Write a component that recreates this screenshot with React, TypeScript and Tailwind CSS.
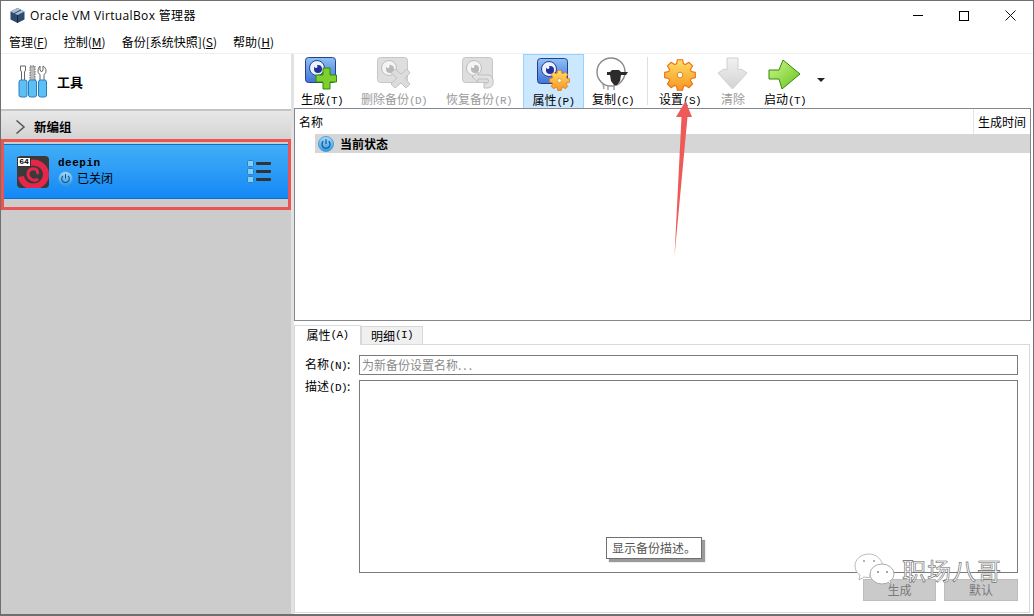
import React from "react";

const cjk = "font-['Noto_Sans_CJK_SC','Liberation_Sans',sans-serif]";
const mono = "font-['Liberation_Mono','Noto_Sans_CJK_SC',monospace]";

// Latin part of the bitmap-looking labels, "(T)" and so on
const Key = ({ k }: { k: string }) => <span className={`${mono} text-[11px] tracking-[-0.6px]`}>({k})</span>;

// Eight teeth, built as one outline so the root circle shows no seam
const gearPath = () => {
  const pts: string[] = [];
  for (let i = 0; i < 8; i++) {
    const a = (i * Math.PI) / 4 - Math.PI / 2;
    [[-0.3, 12.500], [-0.17, 16.500], [0.17, 16.500], [0.3, 12.500]].forEach(([d, r]) => {
      pts.push(`${(17 + r * Math.cos(a + d)).toFixed(2)} ${(17 + r * Math.sin(a + d)).toFixed(2)}`);
    });
  }
  return `M${pts.join("L")}Z`;
};

const Gear = ({ size = 34 }: { size?: number }) => (
  <svg width={size} height={size} viewBox="0 0 34 34">
    <defs>
      <linearGradient id={`gear${size}`} gradientUnits="userSpaceOnUse" x1="0" y1="0" x2="0" y2="34">
        <stop offset="0" stopColor="#ffe066" />
        <stop offset="1" stopColor="#f7931e" />
      </linearGradient>
    </defs>
    <path d={gearPath()} fill={`url(#gear${size})`} stroke="#e8701a" strokeWidth="1.200" strokeLinejoin="round" />
    <circle cx="17" cy="17" r="3" fill="#fff" stroke="#d9801a" strokeWidth="1" />
  </svg>
);

const Snapshot = ({ disabled = false }: { disabled?: boolean }) => (
  <svg width="32" height="27" viewBox="0 0 32 27" className="absolute left-0 top-0">
    <defs>
      <linearGradient id="snapBlue" x1="0" y1="0" x2="0" y2="1">
        <stop offset="0" stopColor="#8fc0f5" />
        <stop offset="1" stopColor="#3f74d6" />
      </linearGradient>
    </defs>
    <rect x="0.5" y="0.5" width="30" height="25" rx="3" fill={disabled ? "#dedede" : "url(#snapBlue)"} stroke={disabled ? "#c6c6c6" : "#24408f"} />
    <circle cx="12" cy="11" r="7.5" fill={disabled ? "#f4f4f4" : "#e9f2ff"} stroke={disabled ? "#bdbdbd" : "#26408e"} />
    <circle cx="13" cy="12" r="4" fill={disabled ? "#b8b8b8" : "#20309a"} />
    <circle cx="11" cy="9.5" r="1.4" fill="#fff" />
  </svg>
);

const TakeIcon = () => (
  <div className="relative h-[34px] w-[34px]">
    <Snapshot />
    <svg width="34" height="34" viewBox="0 0 34 34" className="absolute left-0 top-0">
      <path d="M18 11h7v7h6.500v7H25v7h-7v-7h-7v-7h7z" fill="#7fd02c" stroke="#2f8a0a" strokeWidth="1" />
    </svg>
  </div>
);

const DeleteIcon = () => (
  <div className="relative h-[34px] w-[34px]">
    <Snapshot disabled />
    <svg width="34" height="34" viewBox="0 0 34 34" className="absolute left-0 top-0">
      <path d="M14 16l4-4 6 5 6-5 3 4-5 5 5 6-4 4-5-5-6 5-4-4 6-6z" fill="#dcdcdc" stroke="#c2c2c2" />
    </svg>
  </div>
);

const RestoreIcon = () => (
  <div className="relative h-[34px] w-[34px]">
    <Snapshot disabled />
    <svg width="34" height="34" viewBox="0 0 34 34" className="absolute left-0 top-0">
      <path d="M16 15l-6 5 6 5v-3h9c2 0 2 4 0 4h-3v5h4c7 0 7-13 0-13H16z" fill="#e2e2e2" stroke="#bfbfbf" />
    </svg>
  </div>
);

const PropsIcon = () => (
  <div className="relative h-[34px] w-[34px]">
    <Snapshot />
    <div className="absolute left-[12px] top-[12px]">
      <Gear size={21} />
    </div>
  </div>
);

const SheepIcon = () => (
  <svg width="34" height="34" viewBox="0 0 34 34">
    <path d="M7 26l1 6M12 28v5M18 28v5" stroke="#a8a8a8" strokeWidth="1.6" />
    <ellipse cx="15" cy="15" rx="14" ry="14" fill="#fff" stroke="#8a8a8a" strokeWidth="1.4" />
    <path d="M11 15H14l2-2h7l2 2h7l-2 3h-5l-1 6-3 4h-3l-3-4-1-6h-3z" fill="#2b2b2b" />
  </svg>
);

const ArrowDownIcon = () => (
  <svg width="32" height="34" viewBox="0 0 32 34">
    <defs>
      <linearGradient id="greyArrow" x1="0" y1="0" x2="0" y2="1">
        <stop offset="0" stopColor="#f1f1f1" />
        <stop offset="1" stopColor="#d3d3d3" />
      </linearGradient>
    </defs>
    <path d="M10 1h11v12l3-1 6 4-14.500 16L1 16l6-4 3 1z" fill="url(#greyArrow)" stroke="#cfcfcf" />
  </svg>
);

const StartIcon = () => (
  <svg width="34" height="32" viewBox="0 0 34 32">
    <defs>
      <linearGradient id="startGreen" x1="0" y1="0" x2="1" y2="1">
        <stop offset="0" stopColor="#d2f58a" />
        <stop offset="1" stopColor="#62c41c" />
      </linearGradient>
    </defs>
    <path d="M1 11H11L15 1 32 15 14 30 11 20H1z" fill="url(#startGreen)" stroke="#2f8a0a" />
  </svg>
);

const PowerIcon = ({ size = 17 }: { size?: number }) => (
  <svg width={size} height={size} viewBox="0 0 17 17">
    <defs>
      <linearGradient id={`pw${size}`} x1="0" y1="0" x2="0" y2="1">
        <stop offset="0" stopColor="#a8dcf8" />
        <stop offset="1" stopColor="#2f98e4" />
      </linearGradient>
    </defs>
    <circle cx="8.5" cy="8.5" r="8" fill={`url(#pw${size})`} stroke="#3f9ddf" />
    <path d="M5.6 5.6a4.3 4.3 0 1 0 5.8 0" fill="none" stroke="#0f4f88" strokeWidth="1.2" />
    <path d="M8.5 3.5v5" stroke="#0f4f88" strokeWidth="1.2" />
  </svg>
);

const ToolsIcon = () => (
  <svg width="32" height="33" viewBox="0 0 32 33">
    <path d="M2.500 1h5v4l-1 2v9h-3V7l-1-2z" fill="#fff" stroke="#666" />
    <path d="M12 1h5v15h-5z" fill="#bbb" stroke="#666" strokeDasharray="1.5 1" />
    <path d="M22 1v4l1.500 2 1.500-2V1c2 1 3 3 3 5s-1 3-2 3.500V16h-4V9.500c-1-.5-2-1.500-2-3.500s1-4 2-5z" fill="#fff" stroke="#666" />
    {[1, 10.500, 20.500].map((x) => (
      <rect key={x} x={x} y="15" width="8" height="17" rx="2" fill="#5cc0f5" stroke="#2a7cc0" />
    ))}
  </svg>
);

const DeepinIcon = () => (
  <div className="relative h-8 w-8 rounded-sm bg-[#3a3a3a]">
    <svg width="32" height="32" viewBox="0 0 32 32" className="absolute left-0 top-0">
      <path d="M12 7.500c7-3 17 2 17 11 0 7-6 12-13 12-6 0-11-4-12-10" fill="none" stroke="#e8264a" strokeWidth="6" />
      <path d="M21 23c-4 3-10 0-10-5 0-4 4-6 7-5 3 1 3 4 2 5" fill="none" stroke="#e8264a" strokeWidth="3" />
    </svg>
    <div className={`absolute left-0 top-[1px] h-[10px] w-[14px] border border-[#333] bg-white text-center text-[8px] font-bold leading-[8px] text-black ${mono}`}>
      64
    </div>
  </div>
);

const DetailsIcon = () => (
  <svg width="25" height="24" viewBox="0 0 25 24">
    {[1, 9, 17].map((y) => (
      <g key={y}>
        <rect x="0.500" y={y - 0.5} width="6" height="6" rx="1" fill="#7fd0f8" stroke="#2a7fc8" />
        <rect x="9" y={y + 1} width="15" height="3" rx="1" fill="#333" />
      </g>
    ))}
  </svg>
);

const ToolButton = ({ icon, label, k, disabled, active, className }: { icon: React.ReactNode; label: string; k?: string; disabled?: boolean; active?: boolean; className: string }) => (
  <div className={`flex flex-col items-center ${active ? "border border-[#99d1ff] bg-[#cce8ff]" : ""} ${className}`}>
    <div className="flex h-[37px] items-end justify-center">{icon}</div>
    <div className={`h-[16px] whitespace-nowrap text-[12px] leading-[16px] ${disabled ? "text-[#9a9a9a]" : "text-black"}`}>
      {label}
      {k && <Key k={k} />}
    </div>
  </div>
);

const MenuItem = ({ label, k }: { label: string; k: string }) => (
  <span className="whitespace-nowrap">
    {label}(<span className="underline">{k}</span>)
  </span>
);

export default function App() {
  return (
    <div className={`relative flex h-[616px] w-[1034px] flex-col overflow-hidden border border-b-2 border-[#6f6f6f] bg-white text-black ${cjk}`}>
      {/* Title bar */}
      <div className="flex h-[29px] shrink-0 items-center pl-[8px]">
        <svg width="17" height="17" viewBox="0 0 17 17">
          <path d="M8.500 1L15.500 4.500v8L8.500 16l-7-3.500v-8z" fill="#2f4a70" />
          <path d="M8.500 8L1.500 4.500 8.500 1l7 3.500z" fill="#a9bfd8" />
          <path d="M8.500 8v8" stroke="#14233a" />
          <path d="M5 6.500l7-3.500" stroke="#2a3f5f" />
        </svg>
        <span className="ml-[4px] text-[12px] tracking-[0.35px] font-['Open_Sans','Noto_Sans_CJK_SC',sans-serif]">Oracle VM VirtualBox 管理器</span>
        <div className="ml-auto flex h-full items-center">
          <div className="flex w-[46px] justify-center">
            <div className="h-px w-[10px] bg-black" />
          </div>
          <div className="flex w-[46px] justify-center">
            <div className="h-[10px] w-[10px] border border-black" />
          </div>
          <div className="flex w-[46px] justify-center">
            <svg width="11" height="11" viewBox="0 0 11 11">
              <path d="M0.500 0.500l10 10M10.500 0.500l-10 10" stroke="#111" />
            </svg>
          </div>
        </div>
      </div>

      {/* Menu bar */}
      <div className="flex h-[24px] shrink-0 items-center gap-[16px] border-b border-[#f0f0f0] pl-[8px] text-[12px]">
        <MenuItem label="管理" k="F" />
        <MenuItem label="控制" k="M" />
        <MenuItem label="备份[系统快照]" k="S" />
        <MenuItem label="帮助" k="H" />
      </div>

      <div className="flex min-h-0 flex-1">
        {/* Machine list */}
        <div className="flex w-[290px] shrink-0 flex-col bg-[#cccccc]">
          <div className="flex h-[57px] shrink-0 items-center gap-[7px] border-b-2 border-[#c4c4c4] bg-white pl-[17px]">
            <ToolsIcon />
            <span className="text-[13px] font-bold">工具</span>
          </div>
          <div className="flex h-[29px] shrink-0 items-center bg-gradient-to-b from-[#e8e8e8] to-[#d2d2d2] pl-[14px] pt-[3px]">
            <svg width="11" height="14" viewBox="0 0 11 14">
              <path d="M1.500 0.500L9 7l-7.500 6.500" fill="none" stroke="#555" strokeWidth="1.500" />
            </svg>
            <span className="ml-[8px] text-[12.500px] font-bold">新编组</span>
          </div>
          <div className="mt-[4px] flex h-[55px] shrink-0 items-center border-y border-[#0f6fc8] bg-gradient-to-b from-[#41aef6] to-[#1288f6] pl-[16px] pr-[19px]">
            <DeepinIcon />
            <div className="ml-[9px] flex flex-col">
              <span className={`text-[11px] font-bold leading-[13px] tracking-[0.5px] ${mono}`}>deepin</span>
              <div className="flex items-center gap-[4px] text-[12px] leading-[16px]">
                <PowerIcon size={15} />
                <span>已关闭</span>
              </div>
            </div>
            <div className="ml-auto">
              <DetailsIcon />
            </div>
          </div>
        </div>

        {/* Splitter */}
        <div className="w-[3px] shrink-0 bg-[#e2e2e2]" />

        {/* Snapshot pane */}
        <div className="flex min-w-0 flex-1 flex-col">
          <div className="flex h-[54px] shrink-0 items-start pl-[5px]">
            <ToolButton icon={<TakeIcon />} label="生成" k="T" className="w-[46px]" />
            <ToolButton icon={<DeleteIcon />} label="删除备份" k="D" disabled className="ml-[12px] w-[74px]" />
            <ToolButton icon={<RestoreIcon />} label="恢复备份" k="R" disabled className="ml-[11px] w-[74px]" />
            <ToolButton icon={<PropsIcon />} label="属性" k="P" active className="ml-[7px] w-[61px]" />
            <ToolButton icon={<SheepIcon />} label="复制" k="C" className="ml-[5px] w-[48px]" />
            <div className="ml-[10px] mt-[3px] h-[48px] w-px bg-[#e0e0e0]" />
            <ToolButton icon={<Gear size={32} />} label="设置" k="S" className="ml-[8px] w-[48px]" />
            <ToolButton icon={<ArrowDownIcon />} label="清除" disabled className="ml-[11px] w-[36px]" />
            <ToolButton icon={<StartIcon />} label="启动" k="T" className="ml-[10px] w-[48px]" />
            <div className="ml-[8px] mt-[24px] h-0 w-0 border-x-[4px] border-t-[4px] border-x-transparent border-t-[#222]" />
          </div>

          {/* Snapshot tree */}
          <div className="mr-[2px] flex h-[213px] shrink-0 flex-col border border-[#828790]">
            <div className="flex h-[25px] shrink-0 items-center justify-between text-[12px]">
              <span className="pl-[4px]">名称</span>
              <span className="flex h-full items-center border-l border-[#e5e5e5] pl-[4px] pr-[4px]">生成时间</span>
            </div>
            <div className="ml-[20px] flex h-[19px] items-center gap-[6px] bg-[#d6d6d6] pl-[3px] text-[12px] font-bold">
              <PowerIcon size={16} />
              <span>当前状态</span>
            </div>
          </div>

          {/* Details tabs */}
          <div className="mt-[3px] flex h-[20px] shrink-0 items-end text-[12px]">
            <div className="z-10 -mb-px flex h-[20px] w-[67px] items-center justify-center border border-b-0 border-[#d9d9d9] bg-white pb-[1px]">
              属性<Key k="A" />
            </div>
            <div className="flex h-[18px] w-[62px] items-center justify-center border border-b-0 border-[#d9d9d9] bg-[#f0f0f0]">
              明细<Key k="I" />
            </div>
          </div>
          <div className="mr-[3px] mb-[1px] flex min-h-0 flex-1 flex-col border border-[#d9d9d9] pl-[10px] pr-[11px] pt-[10px]">
            <div className="flex h-[20px] shrink-0 items-center text-[12px]">
              <span className="w-[54px]">名称<Key k="N" />:</span>
              <div className="flex h-full flex-1 items-center border border-[#7a7a7a] pl-[2px] text-[#8a8a8a]">
                为新备份设置名称<span className="tracking-[2px]">...</span>
              </div>
            </div>
            <div className="mt-[5px] flex h-[193px] shrink-0 text-[12px]">
              <span className="w-[54px] leading-[12px]">描述<Key k="D" />:</span>
              <div className="flex-1 border border-[#7a7a7a]" />
            </div>
            <div className="mt-[6px] flex justify-end gap-[8px] text-[12px] leading-[14px] text-[#7a7a7a]">
              <div className="flex h-[22px] w-[73px] items-center justify-center border border-[#bdbdbd] bg-[#cacaca]">生成</div>
              <div className="flex h-[22px] w-[74px] items-center justify-center border border-[#bdbdbd] bg-[#cacaca]">默认</div>
            </div>
          </div>
        </div>
      </div>

      {/* Tooltip */}
      <div className="absolute left-[605px] top-[536px] flex h-[22px] w-[96px] items-center border border-[#6f6f6f] bg-white pl-[5px] text-[12px] text-[#555] shadow-[3px_3px_1px_#9a9a9a]">
        显示备份描述。
      </div>

      {/* Red highlight round the machine */}
      <div className="absolute left-0 top-[138px] h-[71px] w-[290px] border-[3px] border-[#ec5353]" />

      {/* Arrow pointing at the settings button */}
      <svg width="40" height="170" viewBox="0 0 40 170" className="absolute left-[660px] top-[95px]">
        <path d="M24.500 5L31 21H26.500L13.500 160 20.500 21H15z" fill="#ee5a58" />
      </svg>

      {/* Watermark */}
      <svg width="42" height="34" viewBox="0 0 42 34" className="absolute left-[853px] top-[551px]">
        <path d="M15 2C7 2 1 7 1 14c0 4 2 7 5 9l-1 5 5-3c2 .5 4 .5 6 .5-1-7 6-12 13-11C28 7 22 2 15 2z" fill="#fff" stroke="#bbb" />
        <ellipse cx="28" cy="22" rx="12" ry="10" fill="#fff" stroke="#aaa" />
        <path d="M34 30l3 3-1-5" fill="#fff" stroke="#aaa" />
        <circle cx="10" cy="9" r="1" fill="#999" />
        <circle cx="20" cy="9" r="1" fill="#999" />
        <circle cx="24" cy="20" r="1" fill="#888" />
        <circle cx="33" cy="20" r="1" fill="#888" />
      </svg>
      <div className="absolute left-[901px] top-[556px] text-[24px] leading-[26px] tracking-[1px] text-white [-webkit-text-stroke:0.6px_#666]">职场八哥</div>
    </div>
  );
}
